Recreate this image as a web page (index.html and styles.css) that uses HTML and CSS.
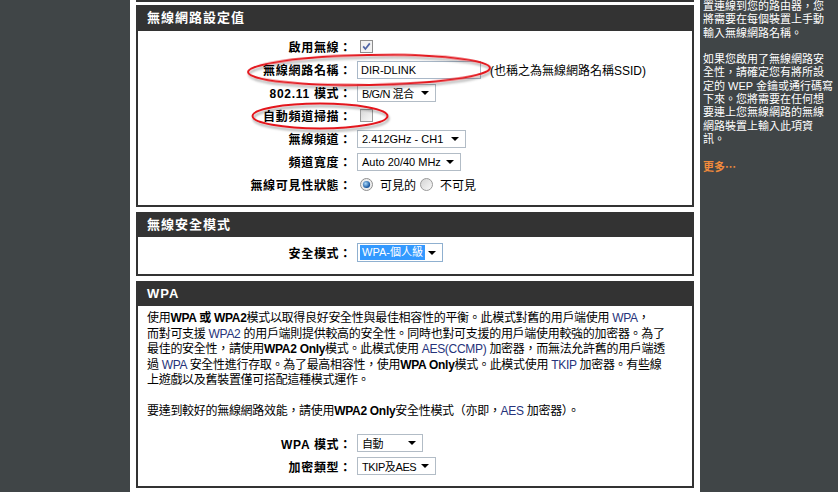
FILE: index.html
```html
<!DOCTYPE html>
<html lang="zh-Hant">
<head>
  <meta charset="UTF-8">
  <meta name="viewport" content="width=device-width, initial-scale=1.0">
  <title>無線網路設定</title>
  <link rel="stylesheet" href="styles.css">
</head>
<body>
  <div class="page">
    <div class="left-bar"></div>

    <div class="main">
      <div class="box-end"></div>

      <!-- 無線網路設定值 -->
      <div class="box box-first">
        <h2 class="box-title">無線網路設定值</h2>
        <div class="box-body form">
          <div class="row">
            <label>啟用無線：</label>
            <div class="ctl">
              <svg class="chk" width="13" height="13" viewBox="0 0 13 13"><rect x="0.5" y="0.5" width="12" height="12" fill="#f2f2f2" stroke="#8d8d8d"/><path d="M3.2 6.4l2.2 2.6L9.8 3.4" fill="none" stroke="#4f65a6" stroke-width="1.7"/></svg>
            </div>
          </div>
          <div class="row">
            <label>無線網路名稱：</label>
            <div class="ctl">
              <input class="txt" type="text" value="DIR-DLINK">
              <span class="note">(也稱之為無線網路名稱SSID)</span>
            </div>
          </div>
          <div class="row">
            <label>802.11 模式：</label>
            <div class="ctl"><span class="sel sel-mode">B/G/N 混合</span></div>
          </div>
          <div class="row">
            <label>自動頻道掃描：</label>
            <div class="ctl">
              <svg class="chk" width="13" height="13" viewBox="0 0 13 13"><defs><linearGradient id="cg" x1="0" y1="0" x2="1" y2="1"><stop offset="0" stop-color="#d6d6d6"/><stop offset="1" stop-color="#fbfbfb"/></linearGradient></defs><rect x="0.5" y="0.5" width="12" height="12" fill="url(#cg)" stroke="#9a9a9a"/></svg>
            </div>
          </div>
          <div class="row">
            <label>無線頻道：</label>
            <div class="ctl"><span class="sel sel-chan">2.412GHz - CH1</span></div>
          </div>
          <div class="row">
            <label>頻道寬度：</label>
            <div class="ctl"><span class="sel sel-bw">Auto 20/40 MHz</span></div>
          </div>
          <div class="row">
            <label>無線可見性狀態：</label>
            <div class="ctl">
              <svg class="rad" width="13" height="13" viewBox="0 0 13 13"><defs><radialGradient id="rg" cx="0.38" cy="0.38" r="0.62"><stop offset="0" stop-color="#a8d8fa"/><stop offset="1" stop-color="#0e4d98"/></radialGradient></defs><circle cx="6.5" cy="6.5" r="6" fill="#ececec" stroke="#8f8f8f"/><circle cx="6.5" cy="6.5" r="3.6" fill="url(#rg)"/></svg>
              <span class="rad-text">可見的</span>
              <svg class="rad rad-2" width="13" height="13" viewBox="0 0 13 13"><defs><linearGradient id="rgg" x1="0" y1="0" x2="1" y2="1"><stop offset="0" stop-color="#d2d2d2"/><stop offset="1" stop-color="#fafafa"/></linearGradient></defs><circle cx="6.5" cy="6.5" r="6" fill="url(#rgg)" stroke="#9a9a9a"/></svg>
              <span class="rad-text">不可見</span>
            </div>
          </div>
        </div>
      </div>

      <!-- 無線安全模式 -->
      <div class="box">
        <h2 class="box-title">無線安全模式</h2>
        <div class="box-body form form-sec">
          <div class="row">
            <label>安全模式：</label>
            <div class="ctl"><span class="sel sel-sec"><span class="hl">WPA-個人級</span></span></div>
          </div>
        </div>
      </div>

      <!-- WPA -->
      <div class="box">
        <h2 class="box-title">WPA</h2>
        <div class="box-body">
          <p class="desc">
            使用<b>WPA 或 WPA2</b>模式以取得良好安全性與最佳相容性的平衡。此模式對舊的用戶端使用 <span class="en">WPA</span>，<br>
            而對可支援 <span class="en">WPA2</span> 的用戶端則提供較高的安全性。同時也對可支援的用戶端使用較強的加密器。為了<br>
            最佳的安全性，請使用<b>WPA2 Only</b>模式。此模式使用 <span class="en">AES(CCMP)</span> 加密器，而無法允許舊的用戶端透<br>
            過 <span class="en">WPA</span> 安全性進行存取。為了最高相容性，使用<b>WPA Only</b>模式。此模式使用 <span class="en">TKIP</span> 加密器。有些線<br>
            上遊戲以及舊裝置僅可搭配這種模式運作。<br>
            <br>
            要達到較好的無線網路效能，請使用<b>WPA2 Only</b>安全性模式（亦即，<span class="en">AES</span> 加密器）。
          </p>
          <div class="form form-wpa">
            <div class="row">
              <label>WPA 模式：</label>
              <div class="ctl"><span class="sel sel-wpa">自動</span></div>
            </div>
            <div class="row">
              <label>加密類型：</label>
              <div class="ctl"><span class="sel sel-cipher">TKIP及AES</span></div>
            </div>
          </div>
        </div>
      </div>
    </div>

    <div class="right-bar">
      <p>置連線到您的路由器，您<br>將需要在每個裝置上手動<br>輸入無線網路名稱。</p>
      <p>如果您啟用了無線網路安<br>全性，請確定您有將所設<br>定的 WEP 金鑰或通行碼寫<br>下來。您將需要在任何想<br>要連上您無線網路的無線<br>網路裝置上輸入此項資<br>訊。</p>
      <p><a class="more" href="#">更多…</a></p>
    </div>
  </div>

  <!-- 紅色圈選標記 -->
  <svg class="marks" width="838" height="492" viewBox="0 0 838 492">
    <defs>
      <filter id="sh" x="-10%" y="-60%" width="120%" height="220%">
        <feDropShadow dx="1" dy="2.5" stdDeviation="1.2" flood-color="#000" flood-opacity="0.35"/>
      </filter>
    </defs>
    <ellipse cx="369" cy="70" rx="121" ry="15" transform="rotate(-1 369 70)" fill="none" stroke="#e3161e" stroke-width="2" filter="url(#sh)"/>
    <ellipse cx="320" cy="116" rx="67.5" ry="12.5" fill="none" stroke="#e3161e" stroke-width="2" filter="url(#sh)"/>
  </svg>
</body>
</html>
```

FILE: styles.css
```css
* {
  margin: 0;
  padding: 0;
  box-sizing: border-box;
}
html, body {
  width: 100%;
  height: 100%;
  background: #fff;
}
body {
  position: relative;
  overflow: hidden;
  font-family: "Liberation Sans", "Noto Sans CJK TC", sans-serif;
  font-size: 12px;
  color: #000;
}
.page {
  display: flex;
  height: 100%;
}
.left-bar {
  flex: none;
  width: 130px;
  background: #404547;
}
.main {
  flex: none;
  width: 570px;
  padding: 0 6px;
}
.right-bar {
  flex: 1;
  background: #404547;
  color: #fff;
  font-size: 11px;
  line-height: 13.3px;
  padding: 0 3px 0 3px;
  white-space: nowrap;
}
.right-bar p {
  margin-bottom: 13.3px;
}
.more {
  color: #f08a3c;
  font-family: "Noto Sans CJK TC", sans-serif;
  font-weight: bold;
  text-decoration: none;
}

/* boxes */
.box-end {
  border-bottom: 2px solid #333;
  margin-bottom: 3px;
}
.box {
  border: 2px solid #333;
  border-top: 0;
  margin-bottom: 5px;
}
.box-title {
  height: 25px;
  line-height: 25px;
  padding-left: 9px;
  background: #333;
  color: #fff;
  font-size: 13px;
  font-weight: bold;
  letter-spacing: 1px;
}
.box-first .box-title {
  height: 26px;
  line-height: 26px;
}

/* form rows */
.form {
  padding: 4px 0 9px;
}
.form-sec {
  padding: 4px 0 10px;
}
.form-wpa {
  padding: 12px 0 8px;
}
.row {
  display: flex;
  align-items: center;
  height: 23px;
}
.row label {
  width: 214px;
  margin-right: 5px;
  text-align: right;
  font-weight: bold;
  letter-spacing: 0.7px;
  white-space: nowrap;
}
.ctl {
  display: flex;
  align-items: center;
  white-space: nowrap;
}
.chk {
  display: block;
  margin-left: 3px;
}
.rad {
  display: block;
  margin-left: 3px;
}
.rad-2 {
  margin-left: 4px;
}
.rad-text {
  margin-left: 7px;
}
.txt {
  width: 124px;
  height: 18px;
  border: 1px solid #a9b8c8;
  padding: 0 3px;
  font-family: "Liberation Sans", "Noto Sans CJK TC", sans-serif;
  font-size: 11px;
  color: #000;
  outline: none;
}
.note {
  margin-left: 9px;
}

/* select boxes */
.sel {
  position: relative;
  display: flex;
  align-items: center;
  height: 18px;
  padding-left: 4px;
  border: 1px solid #b2bcc6;
  background: #fff;
  font-size: 11px;
  letter-spacing: -0.4px;
  white-space: nowrap;
}
.sel::after {
  content: "";
  position: absolute;
  right: 6px;
  top: 6px;
  border-top: 4px solid #000;
  border-left: 4px solid transparent;
  border-right: 4px solid transparent;
}
.sel-mode { width: 79px; }
.sel-chan { width: 109px; letter-spacing: 0; }
.sel-bw { width: 104px; letter-spacing: 0; }
.sel-sec {
  width: 86px;
  height: 19px;
  padding-left: 2px;
  border-color: #8fb0d0;
  letter-spacing: 0;
}
.sel-sec::after { top: 7px; }
.sel-wpa { width: 66px; }
.sel-cipher { width: 79px; }
.hl {
  background: #3399ff;
  color: #fff;
  padding: 0 2px;
  line-height: 15px;
}

/* WPA text */
.desc {
  padding: 5px 9px 0;
  line-height: 15.5px;
  letter-spacing: -0.3px;
  white-space: nowrap;
}
.desc .en {
  color: #26337a;
}

/* overlay marks */
.marks {
  position: absolute;
  left: 0;
  top: 0;
  pointer-events: none;
}
```
